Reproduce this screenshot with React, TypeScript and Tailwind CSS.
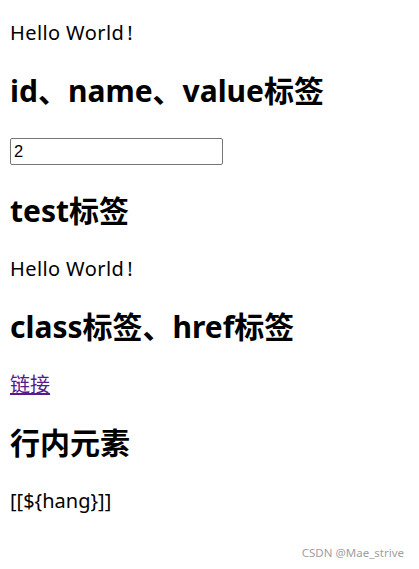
import React from "react";

function Hello() {
  return (
    <p className="h-[26px] leading-[26px] text-[20px] tracking-[0.4px]">
      Hello World<span className="ml-[3px]">!</span>
    </p>
  );
}

export default function App() {
  return (
    <div className="relative w-[419px] h-[569px] bg-white overflow-hidden px-[10px] pt-[20px] text-black font-['Noto_Sans','Noto_Sans_CJK_SC',sans-serif]">
      <Hello />
      <h2 className="mt-[25px] h-[40px] leading-[40px] text-[30px] font-bold">id、name、value标签</h2>
      <div className="mt-[25px] h-[30px] flex items-start pt-[2px]">
        <input
          defaultValue="2"
          className="w-[213px] h-[27px] border border-[#767676] rounded-[2px] px-[3px] text-[16.5px] font-['Liberation_Sans',sans-serif] outline-none"
        />
      </div>
      <h2 className="mt-[25px] h-[40px] leading-[40px] text-[30px] font-bold">test标签</h2>
      <div className="mt-[25px]">
        <Hello />
      </div>
      <h2 className="mt-[25px] h-[40px] leading-[40px] text-[30px] font-bold">class标签、href标签</h2>
      <p className="mt-[25px] h-[26px] leading-[26px] text-[20px]">
        <a href="#" className="text-[#551a8b] underline">链接</a>
      </p>
      <h2 className="mt-[25px] h-[40px] leading-[40px] text-[30px] font-bold">行内元素</h2>
      <p className="mt-[25px] h-[26px] leading-[26px] text-[20px]">[[${"{"}hang{"}"}]]</p>
      <div className="absolute right-[15px] top-[545px] text-[11.5px] leading-[16px] text-[#a0a0a0] font-['Noto_Sans',sans-serif]">
        CSDN @Mae_strive
      </div>
    </div>
  );
}
